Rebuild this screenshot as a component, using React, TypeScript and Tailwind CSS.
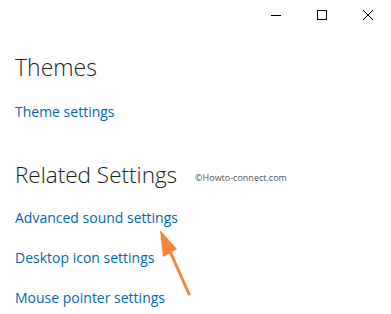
import React from "react";

export default function App() {
  return (
    <div className="relative w-[391px] h-[314px] bg-white overflow-hidden" style={{ fontFamily: '"Open Sans", "Noto Sans", sans-serif' }}>
      <div className="flex justify-end h-[30px]">
        <div className="w-[46px] h-[30px] flex items-center justify-center">
          <svg width="10" height="10" viewBox="0 0 10 10"><path d="M0 5.5H10" stroke="#000" strokeWidth="1" /></svg>
        </div>
        <div className="w-[46px] h-[30px] flex items-center justify-center">
          <svg width="10" height="10" viewBox="0 0 10 10"><rect x="0.5" y="0.5" width="9" height="9" fill="none" stroke="#000" strokeWidth="1" /></svg>
        </div>
        <div className="w-[46px] h-[30px] flex items-center justify-center">
          <svg width="10" height="10" viewBox="0 0 10 10"><path d="M0 0L10 10M10 0L0 10" stroke="#000" strokeWidth="1" /></svg>
        </div>
      </div>
      <div className="pl-[15px] flex flex-col">
        <div className="mt-[22px] text-[23px] leading-[30px] font-light text-[#1a1a1a]">Themes</div>
        <div className="mt-[20px] text-[14px] leading-[20px] text-[#0066b4]">Theme settings</div>
        <div className="mt-[38px] flex items-end">
          <div className="text-[22.5px] leading-[30px] font-light text-[#1a1a1a]">Related Settings</div>
          <div className="ml-[18px] mb-[5px] text-[9px] leading-[14px] text-[#555]">©Howto-connect.com</div>
        </div>
        <div className="mt-[18px] text-[14px] leading-[20px] text-[#0066b4]">Advanced sound settings</div>
        <div className="mt-[20px] text-[14px] leading-[20px] text-[#0066b4]">Desktop icon settings</div>
        <div className="mt-[20px] text-[14px] leading-[20px] text-[#0066b4]">Mouse pointer settings</div>
      </div>
      <svg className="absolute left-0 top-0" width="391" height="314" viewBox="0 0 391 314">
        <path d="M189 294L168 247" stroke="#f5873a" strokeWidth="3" strokeLinecap="round" />
        <polygon points="160,230 177,249 163,257" fill="#f5873a" />
      </svg>
    </div>
  );
}
